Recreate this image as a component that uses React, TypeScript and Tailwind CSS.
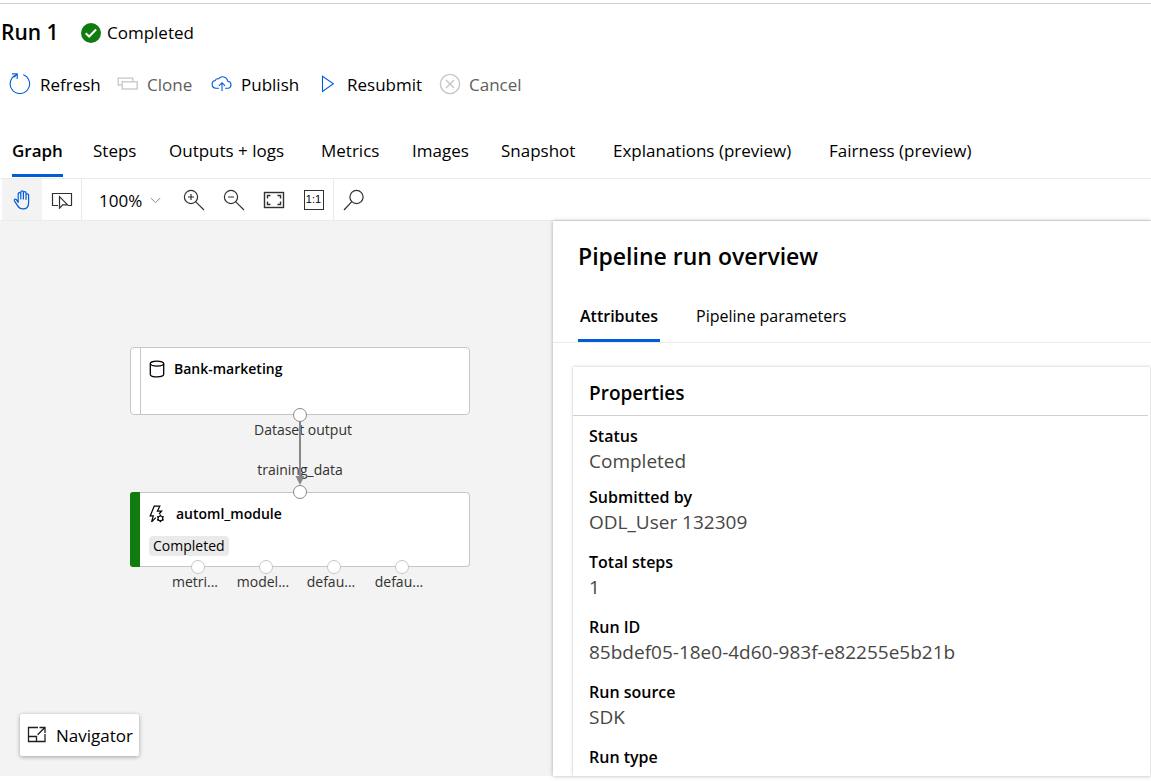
import React from "react";

const commandTabs = [
  "Graph",
  "Steps",
  "Outputs + logs",
  "Metrics",
  "Images",
  "Snapshot",
  "Explanations (preview)",
  "Fairness (preview)",
];

const properties: { label: string; value?: string }[] = [
  { label: "Status", value: "Completed" },
  { label: "Submitted by", value: "ODL_User 132309" },
  { label: "Total steps", value: "1" },
  { label: "Run ID", value: "85bdef05-18e0-4d60-983f-e82255e5b21b" },
  { label: "Run source", value: "SDK" },
  { label: "Run type" },
];

const outputs = ["metri...", "model...", "defau...", "defau..."];

function CheckBadge() {
  return (
    <svg width="20" height="20" viewBox="0 0 20 20" aria-hidden="true">
      <circle cx="10" cy="10" r="10" fill="#107c10" />
      <path d="M4.7 10.2l3.4 3.3 7-7" fill="none" stroke="#fff" strokeWidth="2" />
    </svg>
  );
}

function RefreshIcon() {
  return (
    <svg width="22" height="22" viewBox="0 0 22 22" fill="none" stroke="#015cda" strokeWidth="1.1" aria-hidden="true">
      <path d="M14.2 1.7A9.7 9.7 0 1 1 8.200 1.500L4.600 4.200" />
      <path d="M3 .9h5.200v5" />
    </svg>
  );
}

function CloneIcon() {
  return (
    <svg width="22" height="14" viewBox="0 0 22 14" fill="none" stroke="#c8c6c4" strokeWidth="1.3" aria-hidden="true">
      <path d="M4.5 8H1.2V1.2h14.6V4" />
      <rect x="5.2" y="4.8" width="15" height="7.2" />
    </svg>
  );
}

function PublishIcon() {
  return (
    <svg width="22" height="18" viewBox="0 0 22 18" fill="none" stroke="#015cda" strokeWidth="1.1" aria-hidden="true">
      <path d="M8 13.2H4.8a3.9 3.9 0 0 1-.6-7.7 3 3 0 0 1 3.4-1.7 5.2 5.2 0 0 1 9.2 2.5 3.5 3.5 0 0 1 .5 6.9H14" />
      <path d="M11 16V7.8M7.9 10.8L11 7.7l3.1 3.1" />
    </svg>
  );
}

function PlayIcon() {
  return (
    <svg width="14" height="18" viewBox="0 0 14 18" fill="none" stroke="#015cda" strokeWidth="1.1" aria-hidden="true">
      <path d="M1.5 1.2v15.2L12.4 8.8z" />
    </svg>
  );
}

function CancelIcon() {
  return (
    <svg width="22" height="22" viewBox="0 0 22 22" fill="none" stroke="#c8c6c4" strokeWidth="1.4" aria-hidden="true">
      <circle cx="11" cy="11" r="9.6" />
      <path d="M7 7l8 8M15 7l-8 8" />
    </svg>
  );
}

function HandIcon() {
  return (
    <svg width="18" height="20" viewBox="0 0 18 20" fill="none" stroke="#015cda" strokeWidth="1.2" strokeLinecap="round" strokeLinejoin="round" aria-hidden="true">
      <path d="M5.2 12.3V3.9a1.3 1.3 0 0 1 2.6 0V9 2.1a1.3 1.3 0 0 1 2.6 0V9 2.9a1.3 1.3 0 0 1 2.6 0v6.4-4.2a1.3 1.3 0 0 1 2.6 0v7.3c0 4-2.2 6.5-5.6 6.5-2.7 0-4.1-1.1-5.3-3L1.4 10.8c-.6-1.2.9-2.3 2-1.2z" />
    </svg>
  );
}

function SelectIcon() {
  return (
    <svg width="22" height="18" viewBox="0 0 22 18" fill="none" stroke="#323130" strokeWidth="1.2" aria-hidden="true">
      <path d="M7 14.500H1.500V2.500h19v12H17" />
      <path d="M8.500 5.600v11.600l3.200-3.300h4.900z" />
    </svg>
  );
}

function ZoomIcon({ plus }: { plus?: boolean }) {
  return (
    <svg width="22" height="22" viewBox="0 0 22 22" fill="none" stroke="#323130" strokeWidth="1.2" aria-hidden="true">
      <circle cx="8" cy="8" r="6.6" />
      <path d="M12.8 12.8L21 21M5 8h6" />
      {plus && <path d="M8 5v6" />}
    </svg>
  );
}

function FitIcon() {
  return (
    <svg width="22" height="18" viewBox="0 0 22 18" fill="none" stroke="#323130" strokeWidth="1.4" aria-hidden="true">
      <rect x="1.500" y="1.500" width="19" height="15" />
      <path d="M4.500 7.500v-3h3M14.500 4.500h3v3M17.500 10.500v3h-3M7.500 13.500h-3v-3" />
    </svg>
  );
}

function SearchIcon() {
  return (
    <svg width="22" height="22" viewBox="0 0 22 22" fill="none" stroke="#323130" strokeWidth="1.2" aria-hidden="true">
      <circle cx="13.500" cy="8" r="6.600" />
      <path d="M8.800 12.600L1 21" />
    </svg>
  );
}

function DatabaseIcon() {
  return (
    <svg width="16" height="18" viewBox="0 0 16 18" fill="none" stroke="#000" strokeWidth="1.3" aria-hidden="true">
      <ellipse cx="8" cy="3.600" rx="6.700" ry="2.500" />
      <path d="M1.300 3.600v10.600c0 1.700 2.400 2.700 6.700 2.700s6.700-1 6.700-2.700V3.600" />
    </svg>
  );
}

function AutomlIcon() {
  return (
    <svg width="16" height="18" viewBox="0 0 16 18" fill="none" stroke="#000" strokeWidth="1.200" aria-hidden="true">
      <path d="M6.800 12.600L2.600 16.800l1.700-5.900H1.200L5.200 1.200h5.600L8.400 6.200h4.200L10 9" />
      <circle cx="11.400" cy="13.400" r="2.400" />
      <path d="M11.400 9.600v1.400M11.400 15.800v1.400M8.100 11.500l1.200.7M13.500 14.600l1.200.7M8.100 15.300l1.200-.7M13.500 12.200l1.200-.7" />
    </svg>
  );
}

function NavigatorIcon() {
  return (
    <svg width="20" height="18" viewBox="0 0 20 18" fill="none" stroke="#201f1e" strokeWidth="1.300" aria-hidden="true">
      <path d="M11 1.500H1.500v14h16.500V8" />
      <path d="M1.500 10.500h8v5M10.600 8.800l7-7M12.500 1.500h5.500v5.500" />
    </svg>
  );
}

function Command({ icon, label, disabled, className }: { icon: React.ReactNode; label: string; disabled?: boolean; className: string }) {
  return (
    <button type="button" disabled={disabled} className={`flex items-center ${disabled ? "text-[#605e5c]" : "text-black"} ${className}`}>
      {icon}
      <span className="pt-0.5">{label}</span>
    </button>
  );
}

function Port({ className }: { className: string }) {
  return <span className={`absolute size-3.5 -translate-x-1/2 rounded-full border bg-white ${className}`} />;
}

function GraphCanvas() {
  return (
    <section aria-label="Pipeline graph" className="relative min-w-0 flex-1 overflow-hidden bg-[#f3f3f3] text-sm">
      <article className="absolute left-[130px] top-[126px] flex h-[68px] w-[340px] rounded-[4px] border border-[#c8c6c4] bg-white">
        <div className="w-[10px] border-r border-[#c8c6c4]" />
        <div className="flex h-[42px] items-center gap-[9px] pl-2 font-semibold">
          <DatabaseIcon />
          <h3>Bank-marketing</h3>
        </div>
      </article>
      <article className="absolute left-[130px] top-[271px] flex h-[75px] w-[340px] rounded-[4px] border-y border-r border-[#c8c6c4] bg-white">
        <div className="-my-px w-[10px] rounded-l-[3px] bg-[#107c10]" />
        <div className="flex flex-col items-start pl-[9px]">
          <div className="flex h-[42px] items-center gap-[11px] font-semibold">
            <AutomlIcon />
            <h3>automl_module</h3>
          </div>
          <span className="mt-px rounded-[4px] bg-[#eaeaea] px-1 leading-5">Completed</span>
        </div>
      </article>
      <span className="absolute left-[303px] top-[199px] -translate-x-1/2 whitespace-nowrap leading-5 text-[#323130]">Dataset output</span>
      <span className="absolute left-[300px] top-[239px] -translate-x-1/2 leading-5 text-[#323130]">training_data</span>
      <svg className="absolute left-[294px] top-[200px]" width="12" height="66" viewBox="0 0 12 66" aria-hidden="true">
        <path d="M6 0v58" stroke="#8a8886" strokeWidth="2" />
        <path d="M1.500 55h9L6 64z" fill="#8a8886" />
      </svg>
      <Port className="left-[300px] top-[187px] border-[#8a8886]" />
      <Port className="left-[300px] top-[264px] border-[#8a8886]" />
      <div className="absolute left-[164px] top-[339px] grid grid-cols-4">
        {outputs.map((name, i) => (
          <div key={i} className="flex w-[68px] flex-col items-center">
            <span className="size-3.5 rounded-full border border-[#c8c6c4] bg-white" />
            <span className="pr-1.5 leading-4 text-[#323130]">{name}</span>
          </div>
        ))}
      </div>
      <button type="button" className="absolute bottom-5 left-5 flex h-[42px] w-[119px] items-center gap-[9px] rounded-[2px] bg-white pl-[7px] text-[17px] shadow-[0_1px_4px_rgba(0,0,0,0.35)]">
        <NavigatorIcon />
        <span className="pt-0.5">Navigator</span>
      </button>
    </section>
  );
}

function Overview() {
  return (
    <aside className="z-10 flex w-[598px] shrink-0 flex-col overflow-hidden bg-white shadow-[0_0_4px_rgba(0,0,0,0.3)]">
      <h2 className="pl-[25px] pt-[17px] text-[23px] font-semibold leading-9">Pipeline run overview</h2>
      <div role="tablist" aria-label="Overview" className="mt-4 flex h-[53px] shrink-0 gap-[36px] border-b border-[#eaeaea] pl-[25px] text-base">
        <button type="button" role="tab" aria-selected="true" className="h-[52px] border-b-[3px] border-[#015cda] px-0.5 pt-0.5 font-semibold">Attributes</button>
        <button type="button" role="tab" aria-selected="false" className="h-[52px] border-b-[3px] border-transparent pt-0.5">Pipeline parameters</button>
      </div>
      <section className="ml-5 mr-px mt-6 flex-1 shadow-[0_0_3px_rgba(0,0,0,0.25)]">
        <h3 className="mr-0.5 flex h-[49px] items-center border-b border-[#d2d0ce] pl-4 pt-1 text-[19px] font-semibold">Properties</h3>
        <dl className="flex flex-col gap-[15px] pl-4 pt-2">
          {properties.map(({ label, value }) => (
            <div key={label} className="leading-[25px] first:-mb-1">
              <dt className="text-base leading-[25px] font-semibold">{label}</dt>
              {value && <dd className="text-[19px] leading-[25px] text-[#484644]">{value}</dd>}
            </div>
          ))}
        </dl>
      </section>
    </aside>
  );
}

export default function App() {
  return (
    <div className="flex h-screen flex-col overflow-hidden bg-white pb-1.5 pt-[3px] font-['Open_Sans','Noto_Sans',sans-serif] text-[17px] text-black">
      <header className="flex h-[58px] shrink-0 items-center border-t border-[#d2d0ce] pl-px">
        <h1 className="w-20 text-[21px] font-semibold">Run 1</h1>
        <CheckBadge />
        <span className="pl-1.5">Completed</span>
      </header>
      <div role="toolbar" aria-label="Run actions" className="flex h-[46px] shrink-0 items-center pl-[9px]">
        <Command className="w-[108px] gap-[9px]" icon={<RefreshIcon />} label="Refresh" />
        <Command className="w-[94px] gap-2" icon={<CloneIcon />} label="Clone" disabled />
        <Command className="w-[110px] gap-2" icon={<PublishIcon />} label="Publish" />
        <Command className="w-[118px] gap-3" icon={<PlayIcon />} label="Resubmit" />
        <Command className="gap-2" icon={<CancelIcon />} label="Cancel" disabled />
      </div>
      <div role="tablist" aria-label="Run views" className="mt-[18px] grid h-[54px] shrink-0 grid-cols-[81px_76px_152px_91px_89px_112px_216px_auto] justify-start border-b border-[#eaeaea] pl-3">
        {commandTabs.map((tab, i) => (
          <button
            key={tab}
            type="button"
            role="tab"
            aria-selected={i === 0}
            className={`h-[52px] justify-self-start whitespace-nowrap border-b-[3px] pt-0.5 ${i === 0 ? "border-[#015cda] font-semibold" : "border-transparent"}`}
          >
            {tab}
          </button>
        ))}
      </div>
      <div role="toolbar" aria-label="Graph tools" className="flex h-[42px] shrink-0 items-center border-b border-[#eaeaea] pl-0.5">
        <button type="button" aria-label="Pan" className="flex h-full w-10 items-center justify-center bg-[#f3f3f3]"><HandIcon /></button>
        <button type="button" aria-label="Select" className="flex h-full w-10 items-center justify-center border-r border-[#eaeaea]"><SelectIcon /></button>
        <button type="button" aria-label="Zoom level" className="flex h-full w-[92px] items-center gap-2 pl-[17px] pt-0.5">
          100%
          <svg width="11" height="7" viewBox="0 0 11 7" fill="none" stroke="#8a8886" aria-hidden="true"><path d="M.8 1l4.700 4.700L10.200 1" /></svg>
        </button>
        <button type="button" aria-label="Zoom in" className="flex h-full w-10 items-center justify-center"><ZoomIcon plus /></button>
        <button type="button" aria-label="Zoom out" className="flex h-full w-10 items-center justify-center"><ZoomIcon /></button>
        <button type="button" aria-label="Fit to screen" className="flex h-full w-10 items-center justify-center"><FitIcon /></button>
        <button type="button" aria-label="Actual size" className="flex h-full w-10 items-center justify-center border-r border-[#eaeaea]">
          <span className="flex size-5 items-center justify-center border border-[#323130] font-['Liberation_Sans',sans-serif] text-[11px]">1:1</span>
        </button>
        <button type="button" aria-label="Search" className="flex h-full w-10 items-center justify-center"><SearchIcon /></button>
      </div>
      <main className="flex min-h-0 flex-1">
        <GraphCanvas />
        <Overview />
      </main>
    </div>
  );
}
